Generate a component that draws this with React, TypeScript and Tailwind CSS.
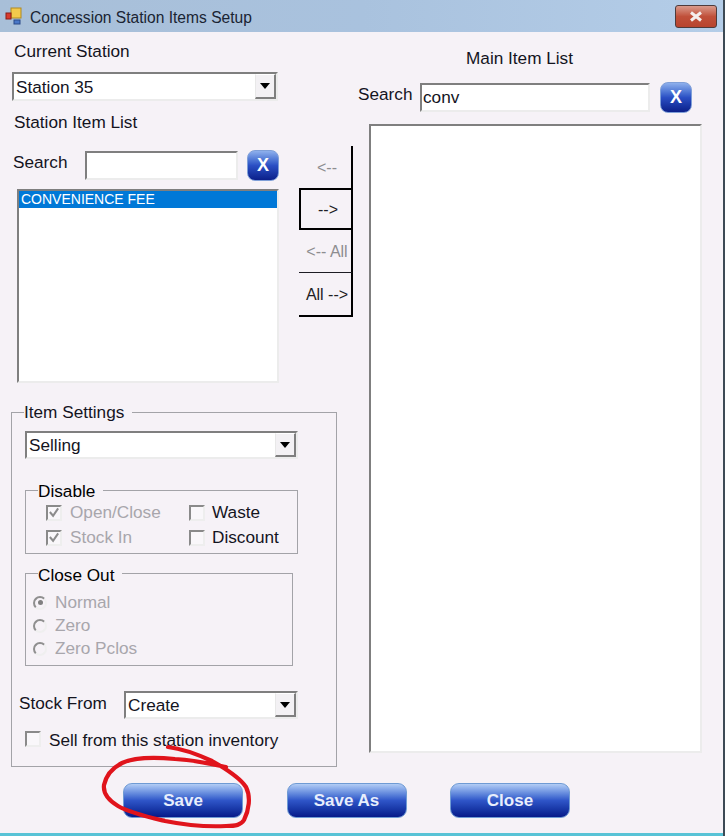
import React from "react";

const sunken =
  "border-2 border-t-[#7f7f7f] border-l-[#7f7f7f] border-r-[#ececec] border-b-[#ececec] bg-white";

const ComboBox = ({ value, className }: { value: string; className: string }) => (
  <div className={`flex items-center ${sunken} ${className}`}>
    <span className="flex-1 pl-[2px] pt-[2px] text-[#14141e]">{value}</span>
    <div className="flex h-full w-[21px] items-center justify-center border-r-2 border-b-2 border-r-[#7f7f7f] border-b-[#7f7f7f] border-l border-t border-l-[#e8e8e8] border-t-white bg-[#f3f1f4]">
      <svg width="10" height="6" viewBox="0 0 10 6">
        <path d="M0 0h10L5 6z" fill="#000" />
      </svg>
    </div>
  </div>
);

const ClearButton = () => (
  <button className="flex h-[31px] w-[32px] items-center justify-center rounded-[8px] border border-[#7f9fd8] bg-gradient-to-b from-[#8fb0ec] via-[#2b4fc4] to-[#0c1f8a] text-[18px] font-bold text-white">
    X
  </button>
);

const BlueButton = ({ label }: { label: string }) => (
  <button className="h-[35px] w-[120px] rounded-[9px] border border-[#6f9bd4] bg-gradient-to-b from-[#b3cdf5] via-[#2f55c8] to-[#08198a] text-[17px] font-bold text-[#e8eefc]">
    {label}
  </button>
);

const CheckBox = ({ checked, disabled }: { checked?: boolean; disabled?: boolean }) => (
  <span className="flex size-[16px] shrink-0 items-center justify-center border-2 border-t-[#8a8a8a] border-l-[#8a8a8a] border-r-[#eeeeee] border-b-[#eeeeee] bg-[#f9f7fa]">
    {checked && (
      <svg width="13" height="13" viewBox="0 0 13 13">
        <path
          d="M2 6l3.5 4L11 2"
          fill="none"
          stroke={disabled ? "#8c8c8c" : "#000"}
          strokeWidth="2.2"
        />
      </svg>
    )}
  </span>
);

const Radio = ({ checked }: { checked?: boolean }) => (
  <span className="flex size-[14px] shrink-0 items-center justify-center rounded-full border-2 border-t-[#8f8f8f] border-l-[#8f8f8f] border-r-[#efefef] border-b-[#efefef]">
    {checked && <span className="size-[5px] rounded-full bg-[#808080]" />}
  </span>
);

const MoveButton = ({
  label,
  enabled,
  active,
  className,
}: {
  label: string;
  enabled?: boolean;
  active?: boolean;
  className: string;
}) => (
  <div
    className={`flex w-[54px] items-center justify-center pl-[4px] pt-[1px] text-[16px] ${
      enabled ? "text-[#1d1d24]" : "text-[#8d8d90]"
    } ${active ? "border-2 border-black" : "border-r-2 border-black"} ${className}`}
  >
    {label}
  </div>
);

export default function App() {
  return (
    <div
      className="relative flex h-[836px] w-[725px] flex-col overflow-hidden border-r-2 border-r-[#3d4a55] bg-[#f6f2f7] text-[17.2px] text-[#14141e]"
      style={{ fontFamily: '"Liberation Sans", Arial, sans-serif' }}
    >
      {/* title bar */}
      <div className="flex h-[32px] shrink-0 items-center bg-gradient-to-r from-[#a8bfd8] via-[#a9c2de] to-[#b4cde8] pl-[5px] pr-[6px]">
        <svg width="17" height="18" viewBox="0 0 17 18" className="shrink-0">
          <rect x="6" y="1" width="10" height="10" fill="#f2c94c" stroke="#b08a20" />
          <rect x="1" y="6" width="5" height="6" fill="#d83a2e" stroke="#8c1d16" />
          <rect x="9" y="13" width="6" height="4" fill="#4a78c8" stroke="#2a4a88" />
        </svg>
        <span className="ml-[8px] flex-1 pt-[3px] text-[15.6px] text-[#1a2433]">
          Concession Station Items Setup
        </span>
        <div className="flex h-[23px] w-[42px] items-center justify-center rounded-[3px] border border-[#4f3b3b] bg-gradient-to-b from-[#d99a8c] via-[#c0503a] to-[#b8442e]">
          <svg width="14" height="11" viewBox="0 0 14 11">
            <path d="M2 1.5l10 8M12 1.5l-10 8" stroke="#f4efee" strokeWidth="3" />
          </svg>
        </div>
      </div>

      <div className="flex h-[735px] shrink-0">
        {/* left side */}
        <div className="flex w-[353px] shrink-0 flex-col">
          <div className="flex h-[351px] shrink-0">
            <div className="ml-[12px] w-[268px] shrink-0">
              <div className="ml-[2px] mt-[9px] h-[20px] leading-[20px]">Current Station</div>
              <ComboBox value="Station 35" className="mt-[11px] h-[29px] w-[266px]" />
              <div className="ml-[2px] mt-[11px] h-[20px] leading-[20px]">Station Item List</div>
              <div className="mt-[18px] flex h-[30px] items-center">
                <span className="ml-px w-[72px] shrink-0 pb-[5px]">Search</span>
                <div className={`h-[29px] w-[153px] ${sunken}`} />
                <div className="ml-[9px]">
                  <ClearButton />
                </div>
              </div>
              <div className={`ml-[5px] mt-[9px] h-[194px] w-[262px] ${sunken}`}>
                <div className="flex h-[17px] items-center bg-[#0078d7] pl-[2px] text-[14px] text-white">
                  CONVENIENCE FEE
                </div>
              </div>
            </div>
            <div className="ml-[19px] mt-[114px] flex flex-col">
              <MoveButton label="<--" className="h-[42px]" />
              <MoveButton label="-->" enabled active className="h-[42px]" />
              <MoveButton label="<-- All" className="h-[43px] border-b border-b-[#1d1d24]" />
              <MoveButton label="All -->" enabled className="h-[44px] border-b-2" />
            </div>
          </div>

          {/* item settings */}
          <fieldset className="ml-[11px] mt-[19px] h-[365px] w-[326px] border border-[#a3a3a8]">
            <legend className="ml-[12px] h-[20px] pr-[8px] leading-[20px]">Item Settings</legend>
            <ComboBox value="Selling" className="ml-[13px] mt-[9px] h-[28px] w-[273px]" />

            <fieldset className="ml-[13px] mt-[21px] h-[74px] w-[273px] border border-[#a3a3a8]">
              <legend className="ml-[12px] h-[20px] pr-[8px] pt-[1px] leading-[20px] text-black">Disable</legend>
              <div className="grid grid-cols-[143px_1fr] pl-[20px]">
                <div className="flex h-[25px] items-center gap-[8px] text-[#a8a6ac]">
                  <CheckBox checked disabled />
                  Open/Close
                </div>
                <div className="flex h-[25px] items-center gap-[7px] text-[#14141e]">
                  <CheckBox />
                  Waste
                </div>
                <div className="flex h-[25px] items-center gap-[8px] text-[#a8a6ac]">
                  <CheckBox checked disabled />
                  Stock In
                </div>
                <div className="flex h-[25px] items-center gap-[7px] text-[#14141e]">
                  <CheckBox />
                  Discount
                </div>
              </div>
            </fieldset>

            <fieldset className="ml-[13px] mt-[9px] h-[103px] w-[268px] border border-[#a3a3a8]">
              <legend className="ml-[12px] h-[20px] pr-[8px] pt-[2px] leading-[20px] text-black">Close Out</legend>
              <div className="pl-[7px] pt-[8px] text-[#a8a6ac]">
                <div className="flex h-[23px] items-center gap-[8px]">
                  <Radio checked />
                  Normal
                </div>
                <div className="flex h-[23px] items-center gap-[8px]">
                  <Radio />
                  Zero
                </div>
                <div className="flex h-[23px] items-center gap-[8px]">
                  <Radio />
                  Zero Pclos
                </div>
              </div>
            </fieldset>

            <div className="ml-[7px] mt-[25px] flex h-[28px] items-center">
              <span className="w-[105px] shrink-0 pb-[2px]">Stock From</span>
              <ComboBox value="Create" className="h-[28px] w-[174px]" />
            </div>
            <div className="ml-[13px] mt-[10px] flex h-[20px] items-center gap-[8px]">
              <CheckBox />
              <span className="pt-[3px]">Sell from this station inventory</span>
            </div>
          </fieldset>
        </div>

        {/* main item list */}
        <div className="ml-[5px] w-[344px] shrink-0">
          <div className="mt-[16px] h-[20px] pl-[108px] leading-[20px]">Main Item List</div>
          <div className="mt-[14px] flex h-[30px] items-center">
            <span className="w-[62px] shrink-0 pb-[5px]">Search</span>
            <div className={`flex h-[29px] w-[230px] items-center pl-[1px] pt-[2px] ${sunken}`}>conv</div>
            <div className="ml-[10px]">
              <ClearButton />
            </div>
          </div>
          <div className={`ml-[11px] mt-[12px] h-[629px] w-[333px] ${sunken}`} />
        </div>
      </div>

      {/* footer */}
      <div className="ml-[123px] mt-[16px] flex gap-[43.5px]">
        <BlueButton label="Save" />
        <BlueButton label="Save As" />
        <BlueButton label="Close" />
      </div>

      <div className="mt-auto h-[3px] shrink-0 bg-[#58c3d6]" />

      {/* red marker circle drawn over the Save button */}
      <svg
        className="pointer-events-none absolute left-0 top-0"
        width="725"
        height="836"
        viewBox="0 0 725 836"
      >
        <path
          d="M168 747C185 749 199 755 212 761C228 770 240 778 246 787C251 797 249 810 244 820C241 825 236 826 226 826C205 827 185 825 165 821C148 817 130 813 118 806C108 800 103 793 104 785C106 776 112 768 122 763C135 757 155 757 175 759C195 760 212 764 226 767"
          fill="none"
          stroke="#e0141c"
          strokeWidth="4.2"
          strokeLinecap="round"
        />
      </svg>
    </div>
  );
}
